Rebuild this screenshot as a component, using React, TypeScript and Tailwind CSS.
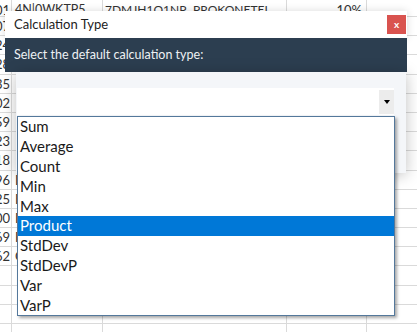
import React from "react";

const rowNums = ["01", "07", "24", "28", "35", "02", "59", "23", "18", "96", "25", "00", "69", "62", "", "", "", ""];
const col2 = ["4N|0WKTP5", "", "", "", "", "", "", "", "", "D", "E", "D", "F", "C", "", "", "", ""];
const items = ["Sum", "Average", "Count", "Min", "Max", "Product", "StdDev", "StdDevP", "Var", "VarP"];

export default function App() {
  return (
    <div className="relative w-[417px] h-[332px] overflow-hidden bg-white" style={{ fontFamily: 'Lato, "Liberation Sans", Arial, sans-serif' }}>
      {/* spreadsheet background */}
      <div className="flex flex-col -mt-[2.2px]">
        {rowNums.map((n, i) => (
          <div
            key={i}
            className="flex h-[19.2px] shrink-0 border-b border-[#dadada] text-[13px] text-[#333] leading-[16px]"
          >
            <div className={"w-[12px] h-full shrink-0 border-r border-[#dadada] overflow-hidden flex justify-end pr-[1px] " + (i === 0 ? "items-start pt-[4px]" : "items-center")}>{n}</div>
            <div className={"w-[91px] h-full shrink-0 border-r border-[#dadada] pl-[3px] overflow-hidden whitespace-nowrap flex " + (i === 0 ? "items-start pt-[4px] text-[12.5px]" : "items-center")}>{col2[i]}</div>
            <div className="w-[184px] h-full shrink-0 border-r border-[#dadada] flex items-start pt-[4px] overflow-hidden whitespace-nowrap text-[12px]">
              {i === 0 && (
                <>
                  <span className="w-[90px] shrink-0 pl-[2px]">7DMJH1Q1NP</span>
                  <span>PROKONETEL</span>
                </>
              )}
            </div>
            <div className="w-[80px] h-full shrink-0 border-r border-[#dadada] flex items-start pt-[4px] justify-end pr-[4px]">{i === 0 ? "10%" : ""}</div>
            <div className="flex-1" />
          </div>
        ))}
      </div>

      {/* dialog */}
      <div className="absolute left-[5px] top-[11px] w-[402px]">
        <div className="h-[27px] bg-white flex items-center justify-between pl-[9px] pr-[1px] shadow-[0_0_8px_rgba(0,0,0,0.15)]">
          <span className="text-[13px] text-[#222]">Calculation Type</span>
          <div className="w-[19px] h-[19px] bg-[#d9534f] flex items-center justify-center text-white text-[10px] font-bold leading-none pb-[2px]">x</div>
        </div>
        <div className="h-[34px] bg-[#2c3e50] flex items-center pl-[9px]">
          <span className="text-[12.5px] text-[#eef1f4]">Select the default calculation type:</span>
        </div>
        <div className="ml-[11px] w-[390px] h-[101px] bg-[#f4f6f9] pt-[16px] pl-[1px] shadow-[0_2px_14px_rgba(0,0,0,0.25)] relative">
          <div className="w-[377px] h-[27px] bg-white flex justify-end items-center">
            <div className="w-[15px] h-[24px] bg-[#ececec] flex items-center justify-center">
              <svg width="6" height="4" viewBox="0 0 6 4"><path d="M0 0H6L3 4Z" fill="#000" /></svg>
            </div>
          </div>
          {/* dropdown list */}
          <div className="absolute left-[1px] top-[44px] w-[378px] bg-white border border-[#54789b] shadow-[2px_2px_3px_rgba(0,0,0,0.35)] flex flex-col z-10">
            {items.map((it) => (
              <div
                key={it}
                className={
                  "h-[19.8px] pl-[2px] flex items-center text-[15px] leading-none " +
                  (it === "Product" ? "bg-[#0078d7] text-white" : "text-[#1a1a1a]")
                }
              >
                {it}
              </div>
            ))}
          </div>
        </div>
      </div>
    </div>
  );
}
